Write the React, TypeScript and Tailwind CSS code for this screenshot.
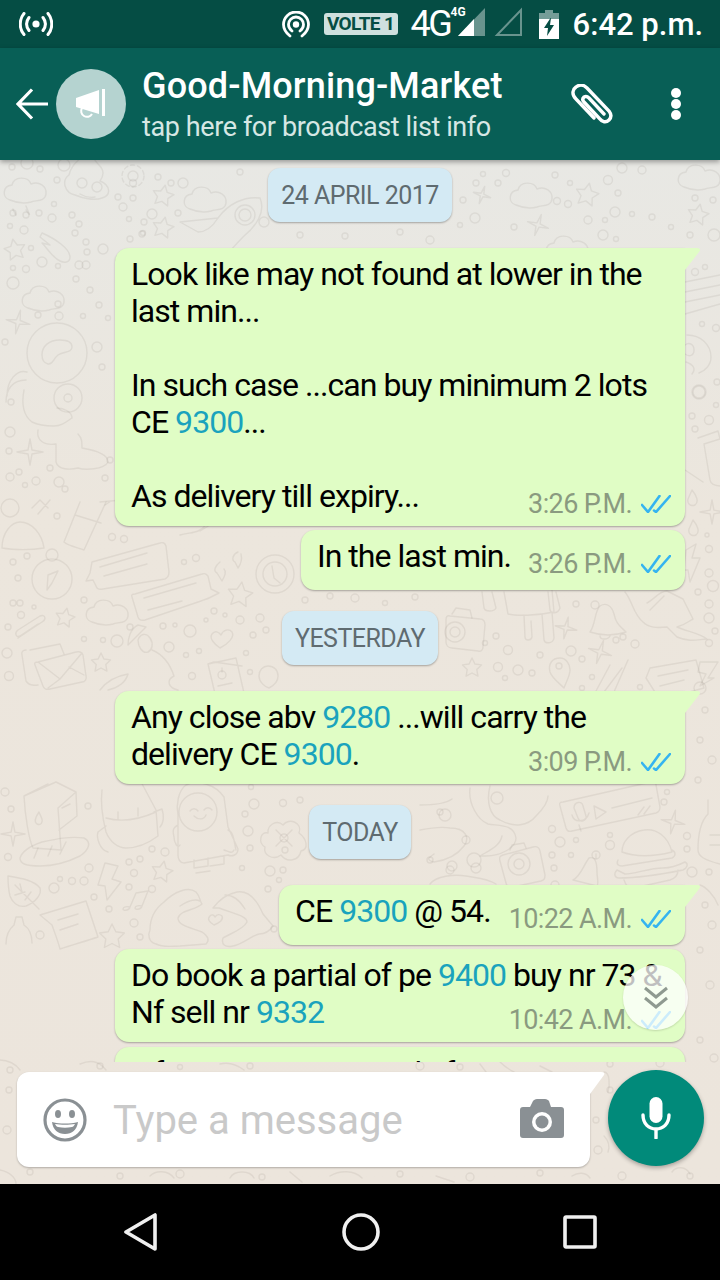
import type { ReactNode } from "react";

const CIRCLES: [number, number, number][] = [
  // top left
  [12, 167, 3], [27, 163, 6], [40, 169, 3], [64, 165, 6], [57, 180, 3], [54, 204, 2.5], [13, 213, 3], [26, 215, 3], [39, 213, 3], [52, 218, 4], [10, 226, 2.5], [24, 230, 4], [72, 215, 3], [79, 224, 3], [75, 233, 3], [31, 248, 2.5], [86, 242, 3], [87, 252, 3], [86, 265, 4], [103, 249, 5], [13, 268, 2.5], [26, 269, 3.5], [42, 262, 5], [58, 266, 2.5], [79, 265, 4], [13, 283, 6], [76, 279, 3],
  [118, 197, 3], [133, 198, 3], [123, 207, 4], [133, 183, 3.5], [158, 177, 3], [171, 183, 3], [183, 183, 5], [129, 219, 2.5], [144, 222, 3], [152, 214, 5], [178, 213, 3], [143, 233, 2.5], [130, 239, 3], [142, 234, 3], [264, 222, 5], [240, 172, 3],
  // astronaut strip
  [58, 304, 3], [38, 315, 3], [59, 316, 4], [83, 316, 2.5], [5, 342, 3], [97, 347, 5], [102, 367, 3], [11, 402, 3], [10, 432, 5], [9, 451, 3], [50, 468, 3], [10, 477, 4], [19, 472, 3], [25, 485, 2.5], [36, 481, 4], [59, 482, 5], [65, 489, 3], [90, 290, 3], [99, 305, 3], [108, 318, 2.5], [110, 460, 3], [105, 478, 3],
  // compass row
  [57, 516, 3], [112, 537, 3.5], [124, 539, 3.5], [13, 562, 3], [27, 556, 3], [18, 578, 3], [20, 603, 3], [13, 603, 3], [21, 615, 3.5], [34, 607, 2], [8, 627, 3], [84, 600, 3], [130, 627, 3], [84, 639, 2.5], [103, 640, 2.5], [117, 641, 6], [163, 626, 3], [175, 625, 2], [190, 631, 6], [169, 647, 5], [186, 655, 2.5], [199, 651, 2.5], [184, 562, 2.5], [196, 558, 3.5], [214, 611, 3], [225, 615, 2], [206, 620, 2], [240, 620, 4], [260, 618, 4], [253, 635, 3], [266, 630, 3], [246, 653, 2.5], [250, 672, 2.5], [7, 653, 5], [9, 676, 4.5], [192, 676, 3.5],
  // carton row
  [5, 792, 4], [11, 809, 3], [88, 806, 3], [8, 857, 3.5], [89, 868, 4], [54, 888, 5], [60, 879, 2.5], [72, 881, 3.5], [84, 881, 4], [94, 897, 3], [109, 909, 3], [134, 923, 4], [40, 935, 4], [129, 862, 3], [140, 859, 3], [165, 852, 4], [152, 849, 3], [134, 873, 3.5], [129, 887, 3], [152, 889, 3.5], [254, 804, 5], [245, 814, 3], [251, 787, 2.5], [283, 803, 3.5], [248, 831, 5], [250, 848, 3], [270, 871, 5], [283, 870, 3], [279, 880, 2.5], [268, 889, 3], [242, 868, 2.5], [274, 929, 3], [140, 937, 3],
  // yesterday row
  [576, 604, 3], [709, 604, 4], [709, 618, 5], [715, 631, 3], [709, 643, 3.5], [496, 636, 3], [485, 643, 2.5], [508, 650, 4.5], [540, 655, 3], [571, 651, 5], [582, 659, 3], [616, 640, 3], [623, 637, 3], [635, 644, 4], [498, 667, 4.5], [518, 670, 5], [532, 673, 3], [505, 678, 2.5], [592, 677, 2.5], [582, 688, 2.5], [640, 687, 2.5], [700, 688, 6],
  [305, 600, 3], [330, 596, 3], [355, 598, 4], [385, 603, 2.5], [415, 597, 3],
  // today row
  [667, 792, 2.5], [664, 802, 3], [552, 829, 3.5], [610, 835, 2.5], [560, 842, 5], [576, 840, 2.5], [610, 845, 4.5], [466, 840, 4], [552, 855, 3], [571, 855, 2.5], [554, 868, 3], [687, 836, 3.5], [687, 849, 3], [692, 872, 5], [709, 872, 3], [555, 885, 4],
  [300, 800, 3], [440, 812, 3], [430, 860, 3], [285, 850, 3], [450, 870, 4],
  // top right
  [483, 174, 2.5], [506, 173, 3.5], [555, 175, 3], [622, 168, 5], [642, 170, 4], [476, 183, 3], [498, 183, 3], [570, 183, 2.5], [608, 180, 4.5], [618, 193, 3], [695, 198, 3], [713, 200, 3], [557, 201, 3.5], [568, 204, 3.5], [615, 212, 5], [463, 200, 3], [475, 218, 5], [460, 225, 2.5], [632, 214, 2.5], [652, 217, 3], [588, 220, 4], [605, 220, 2.5], [671, 227, 2.5], [690, 235, 3], [603, 235, 5], [616, 239, 2.5], [714, 235, 6], [514, 227, 3], [300, 235, 3], [345, 236, 3], [400, 232, 3], [430, 240, 4],
  // right strip
  [695, 272, 3.5], [705, 267, 2.5], [702, 324, 2.5], [716, 328, 3.5], [699, 392, 6], [717, 382, 3], [716, 405, 2.5], [692, 416, 3], [709, 420, 4.5], [695, 429, 3], [707, 535, 2], [709, 549, 3.5], [709, 573, 4], [698, 592, 3], [713, 586, 5.5], [705, 710, 3], [700, 740, 3], [712, 760, 4], [698, 780, 3], [705, 905, 3], [712, 925, 4], [700, 950, 3], [710, 985, 4], [700, 1040, 3], [714, 1058, 4],
  // bottom
  [100, 1066, 3], [180, 1067, 2.5], [250, 1066, 3], [420, 1066, 4], [460, 1067, 3], [610, 1064, 3], [660, 1063, 4], [10, 1070, 3], [610, 1090, 3], [596, 1120, 3], [598, 1150, 4], [30, 1172, 3], [120, 1176, 3], [180, 1174, 4], [262, 1177, 3], [400, 1174, 3], [470, 1177, 4], [540, 1173, 3], [622, 1176, 4], [690, 1176, 3], [9, 1090, 3], [7, 1130, 4],
];

function starPoints(cx: number, cy: number, r: number, inner: number, n: number, rot: number) {
  const pts: string[] = [];
  for (let i = 0; i < n * 2; i++) {
    const rad = i % 2 === 0 ? r : inner;
    const a = rot + (Math.PI * i) / n - Math.PI / 2;
    pts.push(`${(cx + rad * Math.cos(a)).toFixed(1)},${(cy + rad * Math.sin(a)).toFixed(1)}`);
  }
  return pts.join(" ");
}

const STARS: [number, number, number, number][] = [
  [163, 228, 11, 0.2], [15, 250, 11, -0.2], [163, 196, 11, 0.2], [65, 618, 10, 0.2], [101, 663, 10, 0], [240, 595, 13, 0.15], [162, 872, 11, 0.2], [112, 937, 13, 0], [472, 668, 10, 0], [587, 195, 12, 0.2], [698, 215, 11, 0.2],
];

const SPARKLES: [number, number, number, number][] = [
  [18, 322, 12, 0.2], [30, 452, 13, 0], [13, 834, 12, 0], [482, 195, 9, 0.3], [538, 225, 11, 0.3], [566, 628, 11, 0.2], [600, 652, 12, 0.3], [673, 822, 12, 0.2], [712, 512, 12, 0],
];

function Clouds() {
  const cloud = (x: number, y: number, s = 1) =>
    `M${x} ${y + 22 * s}c${-8 * s} ${-2 * s} ${-8 * s} ${-14 * s} ${2 * s} ${-15 * s}c${2 * s} ${-9 * s} ${16 * s} ${-9 * s} ${19 * s} ${-1 * s}c${8 * s} ${-3 * s} ${16 * s} ${2 * s} ${15 * s} ${10 * s}c${-1 * s} ${8 * s} ${-10 * s} ${6 * s} ${-15 * s} ${8 * s}c${-7 * s} ${2 * s} ${-14 * s} ${1 * s} ${-21 * s} ${-2 * s}z`;
  return (
    <>
      <path d={cloud(10, 178)} />
      <path d={cloud(190, 187)} />
      <path d={cloud(516, 183)} />
      <path d={cloud(684, 165)} />
      <path d={cloud(92, 600)} />
      <path d={cloud(552, 236)} />
      <path d={cloud(28, 286)} />
    </>
  );
}

function Doodles() {
  return (
    <svg
      className="absolute inset-0 h-full w-full"
      viewBox="0 160 720 1024"
      fill="none"
      stroke="#7a6f64"
      strokeOpacity="0.11"
      strokeWidth="1.4"
      strokeLinecap="round"
      strokeLinejoin="round"
    >
      {CIRCLES.map(([x, y, r], i) => (
        <circle key={i} cx={x} cy={y} r={r} />
      ))}
      {STARS.map(([x, y, r, rot], i) => (
        <polygon key={i} points={starPoints(x, y, r, r * 0.5, 5, rot)} />
      ))}
      {SPARKLES.map(([x, y, r, rot], i) => (
        <polygon key={i} points={starPoints(x, y, r, r * 0.22, 4, rot)} />
      ))}
      <Clouds />

      {/* poop face */}
      <path d="M75 195c-10-2-14-14-6-20c2-10 10-16 16-20l8 2c2 4 4 6 6 8c6 6 4 12 1 16c10 4 12 14 2 17c-8 3-20 0-27-3z" />
      <circle cx="82" cy="183" r="5" />
      <circle cx="97" cy="187" r="5" />
      <path d="M80 194c5 3 10 4 15 3" />
      {/* gear */}
      <circle cx="133" cy="176" r="5" />
      <circle cx="133" cy="176" r="11" strokeDasharray="4 3" />
      {/* rocket top */}
      <path d="M180 222l38-4c-5 8-12 14-20 14zM218 218c10-14 26-22 42-20c6 14-4 28-16 38c-10 10-18 20-26 28" />
      <circle cx="245" cy="215" r="10" />
      <circle cx="245" cy="215" r="6" />
      {/* comet */}
      <path d="M42 233c14 6 28 16 28 24c0 6-6 6-10 4c-8-4-12-12-18-18l8 2l-10-8z" />

      {/* astronaut */}
      <circle cx="57" cy="353" r="30" />
      <path d="M42 355c0-9 7-15 18-15c8 0 12 3 12 7c0 6-8 4-14 8c-5 4-5 10-10 9c-4-1-6-5-6-9z" />
      <path d="M26 380c-14 0-20 10-20 22M27 372c-10-3-20 8-20 24M24 390c-3 16 0 26 8 32c8 4 16 4 22 4c8 0 12-4 18-8c0-6-8-10-15-10" />
      <circle cx="68" cy="398" r="14" />
      <circle cx="68" cy="398" r="4" />
      <path d="M38 430c-2 10 6 16 18 14l0 18c2 8 14 8 22 6c6 2 26 2 30-6c0-8-14-12-26-14c0-6 0-10-4-14" />
      {/* bubble face right */}
      <path d="M687 335c14 0 24 10 24 22c0 8-6 14-12 16M685 345c4-3 9-1 9 5s-5 7-9 4M686 362c8 3 10 7 6 12" />
      <circle cx="699" cy="392" r="7" />
      <path d="M685 282l35-7M685 292l35-7M685 302l35-7M685 314l35-10" />
      <path d="M698 438l20-7l2 8l-16 5l6 36c1 6 8 6 12 6M685 470l18 12" />
      {/* water drops */}
      <path d="M692 490c5 6 7 12 3 15c-5 2-8-2-7-6zM693 520c5 6 7 12 3 15c-5 2-8-2-7-6z" />
      <path d="M13 210c4 5 4 9 0-1zM26 210c4 5 5 8 0-4" />
      {/* bolt */}
      <path d="M686 550l10-6l-4 14l8 0l-10 24l-2-12l-4 0z" />

      {/* glass and fruit */}
      <path d="M80 502l-16 40c4 4 16 6 20 8l22-48M75 515l26 8" />
      <path d="M105 505l6-4M100 502l22-2" />
      <circle cx="10" cy="508" r="9" />
      <path d="M2 548c0-16 10-26 18-26c12 0 22 12 24 26c-12 2-30 2-42 0z" />
      <path d="M32 508l8-8l8 8M38 514l12-14" />
      <path d="M180 535c6-2 14-2 18-4c6-2 10-8 10-14M200 531l20-12" />
      {/* compass */}
      <circle cx="52" cy="579" r="20" />
      <circle cx="52" cy="555" r="6" />
      <path d="M58 571l-6 12l-5 7l1-15z" />
      {/* chat bubbles */}
      <path d="M92 562l68-19c3-1 5 0 6 3l3 26c0 4-2 6-4 7l-62 10c-4 1-6 0-7-3l-3-6l-7 1l4-8z" />
      <path d="M100 567l47-14M104 576l43-12" />
      <path d="M135 594l67-20c3-1 4 0 6 2l3 13l8 4l-10 5c-2 1-6 2-8 3l-56 19c-4 1-6 0-7-3l-6-20c-1-2 0-3 3-3z" />
      <path d="M144 598l52-15M148 610l34-9" />
      {/* quotes and clock */}
      <path d="M220 562c-5 4-7 9-3 11l5 8c3-5 4-10 2-12M238 552c-5 2-7 8-3 10l3 6c3-4 4-10 3-14" />
      <circle cx="275" cy="574" r="19" />
      <circle cx="275" cy="574" r="12" />
      <path d="M272 566l2 12l6 5" />
      {/* paperclip */}
      <path d="M18 638l24-16c5-3 3-8-2-6l-22 14c-4 3-2 8 2 6l18-12" />
      {/* envelope */}
      <path d="M30 650l30-6l4 10M38 685c-6 1-10-1-12-4l-4-26c-1-3 1-5 4-5" />
      <path d="M38 662l38-10c4-1 6 0 7 3l3 21c1 3-1 6-4 6l-32 7c-3 1-6 0-7-3l-8-21c-1-2 0-3 3-3zM38 662l22 17l22-26M48 688l12-9M84 675l-15-8" />
      {/* mortar board */}
      <path d="M128 645l18-18l-8-2c-8 4-10 14-10 20zM138 640c2-6 8-8 12-2c4 6 2 12-2 14c-6 2-10-6-10-12zM152 650c10 4 18 14 22 26c-8 4-6 12 4 14" />
      <path d="M100 690c6-8 16-14 28-16c-2 8-10 14-20 16" />
      {/* heart */}
      <path d="M220 648c-6-4-11-10-8-14c3-4 7-2 9 1c2-5 8-7 11-3c3 5-4 12-12 16z" />
      {/* card with power */}
      <path d="M208 664l28-6l8 35l-28 5z M208 664l6-2l28 4" />
      <circle cx="222" cy="675" r="4" />
      <path d="M222 668v4M218 686l14-3" />
      <path d="M268 666c-5 0-9 4-9 10c0 6 6 11 10 12c4-2 9-6 9-12c0-6-4-10-10-10z" />

      {/* camera */}
      <path d="M450 616l30 3c4 0 5 3 5 6l-2 22c0 3-2 5-5 4l-26-3c-4 0-6-3-6-6l0-22c0-3 1-5 4-4z" />
      <circle cx="455" cy="632" r="10" />
      <circle cx="455" cy="632" r="5" />
      <path d="M452 614l4-6l14 2l2 8" />
      {/* android */}
      <path d="M482 592l2 16c1 4 10 4 12 0l-4-16M504 592l4 22c8 2 28 2 46-2l-2-22M524 615l1 22c0 4 6 4 7 0l-1-16M542 614l2 26c1 4 9 4 10-2l-2-26M548 592l2 18c1 4 8 4 10-2l-4-16" />
      {/* bell */}
      <path d="M590 632c6-8 4-20 10-26c6-4 12 0 14 8c2 10 6 12 12 18c-12 4-24 4-36 0z" />
      <circle cx="595" cy="605" r="4" />
      <path d="M600 636c0 4 8 4 10 0" />
      {/* rocket */}
      <path d="M625 592c8 10 8 22 18 30c6 6 14 6 24 5l10 10c14 6 22 2 30 2c-8-6-22-8-30-12c8-2 12-6 16-8l-10-20l-16-8c-8 0-12 8-20 12M650 610l14-14" />
      {/* pin */}
      <path d="M560 658c-8 0-12 6-10 14c2 6 8 10 14 16c2-6 6-12 6-18c0-6-4-12-10-12z" />
      <circle cx="559" cy="666" r="3" />
      {/* pens */}
      <path d="M610 665l-14 26M622 668l-18 24M628 660l-14 32" />
      <path d="M650 668l46-8l8 28l-44 12l-14-22z" />
      <path d="M658 676l30-6M660 686l24-6" />
      <path d="M700 662l18 0l-10 16l6 0l-14 8l6-12l-8-2z" />

      {/* milk carton */}
      <path d="M24 796l32-14l20 10l-18 16l3 42l-28-2c-4-8-8-32-9-52zM58 808l18-16l1 24l-18 14M24 796l24-12" />
      <path d="M39 812c-4 6-5 10-2 12c4 2 6-2 5-5z" />
      <path d="M62 808l8-4" />
      {/* bread */}
      <path d="M20 858c2-6 10-12 22-16c14-3 28-6 42-4c8 4 5 12-4 18c-12 6-26 10-40 10c-14 0-20-2-20-8zM38 848l-4 10M52 846l-4 10M66 842l-6 12" />
      {/* backpack */}
      <path d="M102 790c-2 16 2 34 4 42c4 10 12 16 20 16c12 0 24-6 32-12l-2-26l-16-30M106 818c14 4 32 2 50-6M118 820v-8M138 816v-8M106 826l-8 6c-2 6 2 18 10 20M154 812l8-3c2 6 2 14-2 18" />
      {/* smile astronaut */}
      <circle cx="198" cy="812" r="19" />
      <path d="M178 815c-2-10 0-24 8-30c12-6 30 0 38 12l4 30l10 22c0 6-6 8-10 6l-44 8c-4 0-6-4-6-8zM228 830c6 2 6 12 8 20M224 850c6 2 8 4 10 0M178 825c-4 2-6 4-4 12c0 6 4 12 6 8M194 860v8l14-2l0-8M210 866l14-2l0-8M196 873l14-2" />
      <path d="M190 811c2-3 6-3 8 0M204 810c2-3 6-3 8 0M194 816c4 4 10 4 12-1" />
      {/* flower */}
      <circle cx="284" cy="838" r="4" />
      <path d="M268 833c-8-2-10 10-3 14c-2 8 8 14 16 8c6 8 18 6 20-4c8-2 6-12-2-18c4-10-10-16-16-8c-6-6-16 0-15 8zM276 830l16 16M292 830l-16 16" />
      {/* bolt */}
      <path d="M105 863l13 3l-6 13l9 3l-14 18l-2-14l-7-1z" />
      {/* leaf */}
      <path d="M8 876c12 2 26 4 32 12c2 6-4 14-14 18c-8 2-14-4-16-10c-2-8-2-14-2-20zM15 885l24 24M15 895l10-3M20 884l2 8M25 900l6-8" />
      {/* note card */}
      <path d="M40 915l46-14l12 36c-12 4-26 8-38 12c-2-8-6-18-8-24z" />
      <path d="M58 920l20-6M60 930l18-6" />
      {/* bottle */}
      <path d="M14 925l2-8l6 0l2 8c6 4 8 10 8 18M6 944c0-8 2-14 8-19" />
      {/* music note */}
      <path d="M130 907l6-14l12-2l-6 15M130 907c-3-1-7 0-7 2s6 2 7-2zM142 906c-3-1-7 0-7 2s6 2 7-2z" />
      {/* heart hands */}
      <path d="M150 930c0-12 6-22 14-28c10-10 24-16 32-10c4 4 4 10 6 12c-6 6-22 6-24 14c0 8 14 10 24 14c6 4 8 8 4 12l-26 2c-8 0-16 2-24-2c-8-2-8-10-6-14zM180 906c6-4 14-8 20-5" />
      <path d="M213 908c6-8 14-14 24-16c12-2 20 8 26 22l10 12c-4 6-10 8-14 8c-8 2-16 10-26 12c-8 2-12-2-10-8c6-4 20-8 24-16c0-6-12-8-28-14zM225 895c8 0 14 4 20 14" />
      <path d="M214 925c-5-3-7-6-4-9c2-2 4-1 5 1c2-3 5-3 7-1c2 4-3 7-8 9z" />

      {/* voice note */}
      <path d="M563 802l88-20c3-1 5 0 5 3l4 22c0 3-1 5-4 6l-84 18c-3 1-5 0-6-3l-6-22c-1-3 0-4 3-4z" />
      <path d="M574 808c0-6 8-8 9-2l3 10c1 5-6 7-8 2zM572 815c2 8 14 8 17-2M579 825l2 6" />
      <path d="M594 806l12 6l-10 7zM612 808l40-10M638 815l6-8M644 814l6-8" />
      {/* octopus */}
      <path d="M470 788c-2 16 8 32 18 36c12 2 26 0 28 14c0 10-16 18-30 18l-6 0c10-6 20-10 22-20M420 830c10-2 20-4 30-2c16 0 20 10 14 18c-6 8-16 14-30 16c-8-2-6-4 0-8M490 786c-4 16 0 30 10 34c14 8 28 6 36-4c8-8 12-14 12-20" />
      <path d="M420 805c8 0 24 0 32-6" />
      <circle cx="445" cy="815" r="6" />
      <circle cx="497" cy="798" r="6" />
      {/* camera small */}
      <path d="M503 855l30-8c4-1 6 0 7 4l5 24c0 4-1 5-4 6l-28 6c-4 1-6 0-7-4l-6-22c-1-4 0-5 3-6z" />
      <circle cx="519" cy="864" r="11" />
      <circle cx="519" cy="864" r="5" />
      <path d="M510 850l2-5l12-2l2 5" />
      {/* bell */}
      <path d="M573 880c8-4 10-14 16-22c6-2 8 4 8 14c0 6 2 10 0 14zM596 858l0-4" />
      <circle cx="596" cy="855" r="4" />
      {/* burger */}
      <path d="M622 852c0-10 8-20 22-22c12-2 24 6 28 22c-16 4-34 6-50 0zM618 860c-2 4 0 6 4 6l50-8c4-2 4-6 0-8M617 870l8 4c10 0 24-6 38-6c10 0 18-4 22-6c4 2 2 6-2 8c-20 4-44 8-64 8c-4 0-6-4-2-8zM624 880c2 6 4 8 10 8l36-8c6-2 8-6 8-10" />
      {/* bottle right */}
      <path d="M708 800v14c-8 8-10 20-10 36c0 6 6 10 22 14M710 835h10M710 845h10" />
      {/* kids */}
      <circle cx="452" cy="866" r="5" />
      <circle cx="474" cy="860" r="7" />
      <circle cx="476" cy="868" r="5" />
      <path d="M430 884c6-8 24-10 36-8c10 2 20 2 30 8" />
      <path d="M700 885c6 2 14 10 18 20" />

      {/* bottom strip */}
      <path d="M0 1060c8 0 16 4 20 10M80 1064c10-4 18-4 26 6M220 1064c8-2 16 0 24 6M480 1064l6 8M500 1062c6 6 10 8 14 10M540 1066l12 6M672 1172c4-6 14-6 18 2M150 1176c6-6 18-6 24 2M290 1172l12 10M330 1176c10-6 24-6 32 2M436 1176l18 6M572 1176c6-4 14-4 18 2" />
      <path d="M0 1170c10 2 16 8 16 14M230 1178c4-8 20-8 24 0" />
      <path d="M604 1072c6 0 6 14 4 20M604 1136c4 4 6 10 4 16" />
    </svg>
  );
}

function Ticks() {
  return (
    <svg width="30" height="18" viewBox="0 0 30 18" fill="none" stroke="#35b4f0" strokeWidth="2.6" strokeLinecap="round" className="shrink-0">
      <path d="M1 10l6 7L18.5 1M13 15.5l2 1.5L29 1" />
    </svg>
  );
}

function Meta({ time }: { time: string }) {
  return (
    <div className="flex items-center gap-[9px] text-[27px] leading-[30px] tracking-[-0.6px] text-[#8a9a80] whitespace-nowrap">
      <span>{time}</span>
      <Ticks />
    </div>
  );
}

function DateChip({ label, top }: { label: string; top: string }) {
  return (
    <div className={`self-center ${top} flex h-[54px] shrink-0 items-center rounded-[12px] bg-[#d4eaf4] px-[13px] text-[25px] tracking-[-0.55px] text-[#5f6b70] shadow-[0_1px_2px_rgba(0,0,0,0.3)]`}>
      {label}
    </div>
  );
}

function Tail() {
  return (
    <svg className="absolute -right-[16px] top-0" width="17" height="23" viewBox="0 0 17 23">
      <path d="M0 0h13c3 0 4 2 2 4L1 22H0z" fill="#e0fdc5" />
    </svg>
  );
}

function Bubble({ children, tail, className }: { children: ReactNode; tail?: boolean; className?: string }) {
  return (
    <div
      className={`relative shrink-0 rounded-[14px] bg-[#e0fdc5] text-black shadow-[0_1px_2px_rgba(0,0,0,0.3)] ${
        tail ? "rounded-tr-none" : ""
      } ${className ?? ""}`}
    >
      {children}
      {tail && <Tail />}
    </div>
  );
}

function Num({ children }: { children: ReactNode }) {
  return <span className="text-[#1aa3bd]">{children}</span>;
}

function Header() {
  return (
    <header className="relative z-10 flex h-[112px] shrink-0 items-center bg-[#085f56] pl-[16px] shadow-[0_2px_5px_rgba(0,0,0,0.35)]">
      <svg width="32" height="32" viewBox="0 0 32 32" fill="none" stroke="#fff" strokeWidth="3.2" className="shrink-0">
        <path d="M32 16H3M16 1.5L2 16l14 14.5" />
      </svg>
      <div className="ml-[8px] flex h-[70px] w-[70px] shrink-0 items-center justify-center rounded-full bg-[#b5d3d0]">
        <svg width="30" height="30" viewBox="0 0 30 30" fill="#fff">
          <path d="M0 9l23-8v24L0 18z" />
          <rect x="26" y="0" width="3" height="27" />
          <path d="M6 19a5.5 5.5 0 0 0 10 6" fill="none" stroke="#fff" strokeWidth="2" />
        </svg>
      </div>
      <div className="ml-[16px] flex min-w-0 flex-1 flex-col">
        <div className="text-[36px] font-medium leading-[40px] tracking-[0.15px] text-white whitespace-nowrap">Good-Morning-Market</div>
        <div className="mt-[5px] text-[27px] leading-[32px] tracking-[-0.4px] text-[#d6e7e4] whitespace-nowrap">tap here for broadcast list info</div>
      </div>
      <svg width="44" height="40" viewBox="0 0 44 40" fill="none" stroke="#fff" strokeWidth="3.4" strokeLinecap="round" className="mr-[56px] shrink-0">
        <path d="M23 34L5 15c-5-5-3-10 0-12c4-3 8-2 11 1l22 23c3 4 2 7 0 9c-3 3-7 2-9-1L13 18c-2-2-1-4 0-5c2-1 3-1 5 1l15 16" />
      </svg>
      <div className="mr-[39px] flex shrink-0 flex-col gap-[1px]">
        <span className="h-[10px] w-[10px] rounded-full bg-white" />
        <span className="h-[10px] w-[10px] rounded-full bg-white" />
        <span className="h-[10px] w-[10px] rounded-full bg-white" />
      </div>
    </header>
  );
}

function StatusBar() {
  return (
    <div className="flex h-[48px] shrink-0 items-center bg-[#054d44] pl-[19px] pr-[17px] text-white">
      <svg width="34" height="24" viewBox="0 0 34 24" fill="none" stroke="#fff" strokeWidth="3" strokeLinecap="round">
        <circle cx="17" cy="12" r="3.6" fill="#fff" stroke="none" />
        <path d="M10 5.5c-3 4-3 9 0 13M24 5.5c3 4 3 9 0 13M5 1.5c-5 6-5 15 0 21M29 1.5c5 6 5 15 0 21" />
      </svg>
      <div className="flex-1" />
      <svg width="28" height="27" viewBox="0 0 28 27" fill="none" stroke="#fff" strokeWidth="2.8" strokeLinecap="round">
        <circle cx="14" cy="13.5" r="3.2" fill="#fff" stroke="none" />
        <path d="M8 25C3 21 1.5 17 1.5 13.5a12.5 12.5 0 0 1 25 0c0 3.5-1.500 7.500-6.500 11.500M10 20c-2.500-2-3.500-4.500-3.500-6.500a7.500 7.500 0 0 1 15 0c0 2-1 4.500-3.500 6.500" />
      </svg>
      <div className="ml-[14px] flex h-[22px] w-[74px] items-center justify-center rounded-[3px] bg-[#cfe0de] text-[19px] font-bold tracking-[-0.6px] text-[#054d44]">VOLTE 1</div>
      <div className="relative ml-[13px] flex h-[40px] w-[112px] shrink-0 items-center">
        <span className="text-[36px] leading-none tracking-[-2.5px]">4G</span>
        <span className="absolute left-[40px] top-[2px] text-[12px] font-bold leading-none">4G</span>
        <svg className="absolute left-[47px] top-[3px]" width="66" height="30" viewBox="0 0 66 30">
          <path d="M27 1v28H0z" fill="#fff" fillOpacity="0.4" />
          <path d="M16 12v17H0z" fill="#fff" />
          <path d="M63 3v25H39z" fill="none" stroke="#fff" strokeOpacity="0.4" strokeWidth="2" />
        </svg>
      </div>
      <svg width="20" height="29" viewBox="0 0 20 29" className="ml-[16px] shrink-0">
        <path d="M6 0h8v3h6v7H0V3h6z" fill="#fff" fillOpacity="0.45" />
        <path d="M0 9h20v20H0z" fill="#fff" />
        <path d="M11.500 8L5 18h4l-1 8 7-11h-4l1-7z" fill="#054d44" />
      </svg>
      <div className="ml-[14px] text-[31px] font-medium leading-none tracking-[0px] whitespace-nowrap">6:42 p.m.</div>
    </div>
  );
}

function InputBar() {
  return (
    <div className="relative flex shrink-0 items-start pl-[17px] pt-[10px]">
      <div className="relative flex h-[95px] w-[573px] items-center rounded-[12px] rounded-tr-none bg-white pl-[26px] shadow-[0_1px_2px_rgba(0,0,0,0.25)]">
        <svg width="44" height="44" viewBox="0 0 44 44" className="shrink-0">
          <circle cx="22" cy="22" r="20" fill="none" stroke="#8a9094" strokeWidth="3.2" />
          <ellipse cx="15" cy="16" rx="3" ry="4" fill="#8a9094" />
          <ellipse cx="29" cy="16" rx="3" ry="4" fill="#8a9094" />
          <path d="M9 24c8 2 18 2 26 0c-1 8-6 12-13 12s-12-4-13-12z" fill="#8a9094" />
          <path d="M12 26c6 1 14 1 20 0c-1 2-2 3-3 3c-5 1-9 1-14 0c-1 0-2-1-3-3z" fill="#fff" />
        </svg>
        <div className="ml-[26px] flex-1 pt-[2px] text-[40px] leading-none text-[#c9c9c9] whitespace-nowrap">Type a message</div>
        <svg width="44" height="39" viewBox="0 0 44 39" className="mr-[26px] mb-[3px] shrink-0">
          <path d="M3 8h7l3-6c1-1 2-2 4-2h8c2 0 3 1 4 2l2 6h10c2 0 3 1 3 3v25c0 2-1 3-3 3H3c-2 0-3-1-3-3V11c0-2 1-3 3-3z" fill="#8a9094" />
          <circle cx="22" cy="23" r="10" fill="#fff" />
          <circle cx="22" cy="23" r="6.5" fill="#8a9094" />
        </svg>
        <svg className="absolute -right-[15px] top-0" width="16" height="22" viewBox="0 0 16 22">
          <path d="M0 0h12c3 0 4 1 3 3L1 22H0z" fill="#fff" />
        </svg>
      </div>
      <div className="-mt-[2px] ml-[18px] flex h-[96px] w-[96px] items-center justify-center rounded-full bg-[#018a7a] shadow-[0_2px_4px_rgba(0,0,0,0.3)]">
        <svg width="30" height="42" viewBox="0 0 30 42" fill="none" stroke="#fff" strokeWidth="3.4" strokeLinecap="round">
          <rect x="8.500" y="0" width="13" height="26" rx="6.500" fill="#fff" stroke="none" />
          <path d="M2 18c0 9 6 14 13 14s13-5 13-14M15 32v9" />
        </svg>
      </div>
    </div>
  );
}

export default function App() {
  return (
    <div className="flex h-[1280px] w-[720px] flex-col overflow-hidden bg-black font-['Roboto',sans-serif]">
      <StatusBar />
      <Header />

      <main className="relative flex h-[1024px] shrink-0 flex-col bg-linear-to-b from-[#e8e8e4] via-[#ece6dd] via-35% to-[#ece5dc]">
        <Doodles />

        <div className="relative flex h-[902px] shrink-0 flex-col overflow-hidden px-[35px] pt-[8px] text-[32px] leading-[37px] tracking-[-0.95px]">
          <DateChip label="24 APRIL 2017" top="" />

          <Bubble tail className="ml-[80px] mt-[26px] pb-[7px] pl-[16px] pr-[14px] pt-[8px]">
            <div className="whitespace-pre-line">
              {"Look like may not found at lower in the\nlast min...\n\nIn such case ...can buy minimum 2 lots\n"}
              CE <Num>9300</Num>...{"\n\nAs delivery till expiry..."}
            </div>
            <div className="-mt-[26px] flex justify-end">
              <Meta time="3:26 P.M." />
            </div>
          </Bubble>

          <Bubble className="mt-[4px] flex self-end pb-[11px] pl-[16px] pr-[14px] pt-[8px]">
            <div>In the last min.</div>
            <div className="ml-[17px] mt-[11px]">
              <Meta time="3:26 P.M." />
            </div>
          </Bubble>

          <DateChip label="YESTERDAY" top="mt-[21px]" />

          <Bubble tail className="ml-[80px] mt-[26px] pb-[7px] pl-[16px] pr-[14px] pt-[8px]">
            <div>
              Any close abv <Num>9280</Num> ...will carry the
              <br />
              delivery CE <Num>9300</Num>.
            </div>
            <div className="-mt-[26px] flex justify-end">
              <Meta time="3:09 P.M." />
            </div>
          </Bubble>

          <DateChip label="TODAY" top="mt-[21px]" />

          <Bubble tail className="mt-[26px] flex self-end pb-[11px] pl-[16px] pr-[14px] pt-[8px]">
            <div>
              CE <Num>9300</Num> @ 54.
            </div>
            <div className="ml-[18px] mt-[11px]">
              <Meta time="10:22 A.M." />
            </div>
          </Bubble>

          <Bubble className="ml-[80px] mt-[4px] pb-[7px] pl-[16px] pr-[14px] pt-[8px]">
            <div className="whitespace-nowrap">
              Do book a partial of pe <Num>9400</Num> buy nr 73 &amp;
              <br />
              Nf sell nr <Num>9332</Num>
            </div>
            <div className="-mt-[26px] flex justify-end">
              <Meta time="10:42 A.M." />
            </div>
          </Bubble>

          <Bubble className="ml-[80px] mt-[5px] pb-[11px] pl-[16px] pr-[14px] pt-[8px]">
            <div className="whitespace-nowrap">
              Nf can go in upper side from <Num>9340</Num> &amp; Bn
            </div>
          </Bubble>
        </div>

        <InputBar />

        {/* scroll to bottom */}
        <div className="absolute left-[623px] top-[805px] flex h-[65px] w-[65px] items-center justify-center rounded-full bg-white/75 shadow-[0_1px_2px_rgba(0,0,0,0.15)]">
          <svg width="26" height="24" viewBox="0 0 26 24" fill="none" stroke="#8f9a90" strokeWidth="3">
            <path d="M2 2l11 9 11-9M2 12l11 9 11-9" />
          </svg>
        </div>
      </main>

      <nav className="flex h-[96px] shrink-0 items-center justify-between bg-black pl-[124px] pr-[123px]">
        <svg width="34" height="38" viewBox="0 0 34 38" fill="none" stroke="#f0f0f0" strokeWidth="3.6" strokeLinejoin="round">
          <path d="M31 2v34L2 19z" />
        </svg>
        <svg width="38" height="38" viewBox="0 0 38 38" fill="none" stroke="#f0f0f0" strokeWidth="3.6">
          <circle cx="19" cy="19" r="17" />
        </svg>
        <svg width="34" height="34" viewBox="0 0 34 34" fill="none" stroke="#f0f0f0" strokeWidth="3.6" strokeLinejoin="round">
          <rect x="2" y="2" width="30" height="30" rx="1" />
        </svg>
      </nav>
    </div>
  );
}
